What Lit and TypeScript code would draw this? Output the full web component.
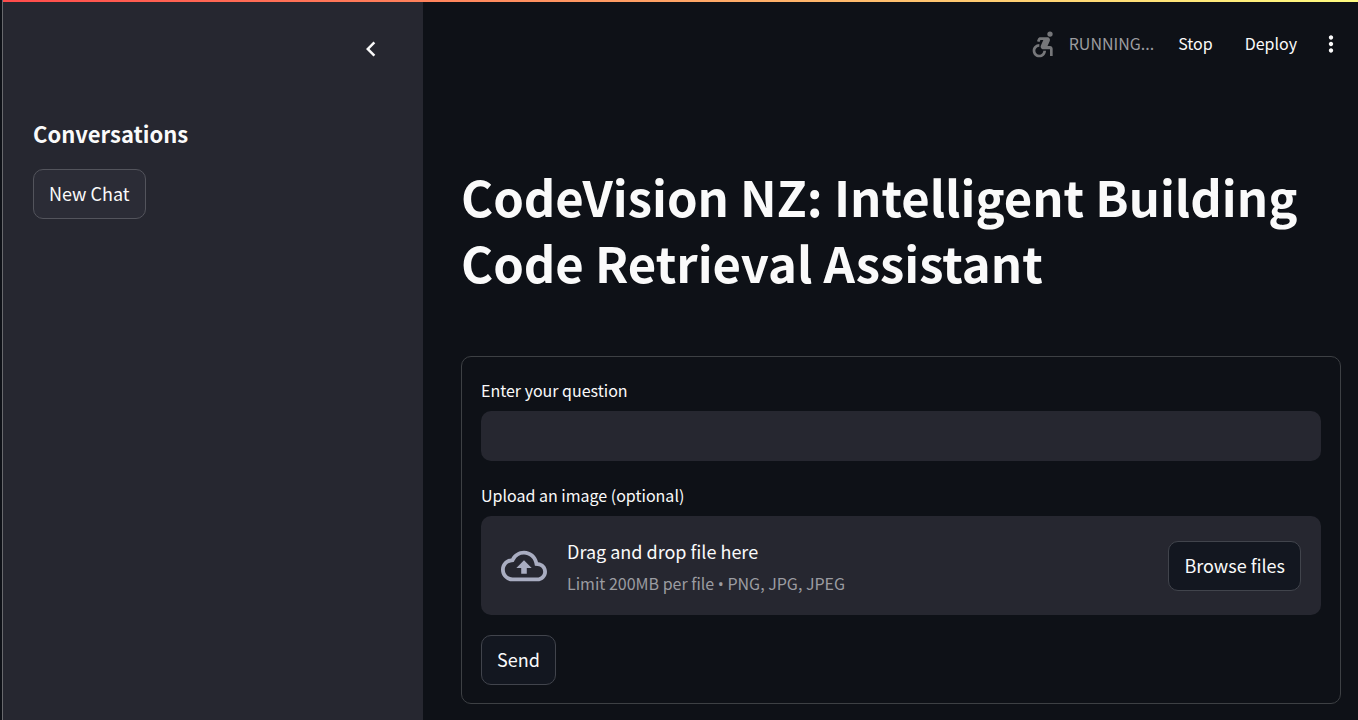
import { LitElement, html, css } from "lit";
import { customElement } from "lit/decorators.js";

@customElement("app-root")
export class AppRoot extends LitElement {
  static styles = css`
    :host {
      display: block;
      font-family: "Noto Sans CJK SC", "Noto Sans", sans-serif;
      font-size: 18px;
      line-height: 28px;
      color: #fafafa;
      background: #0e1117;
    }
    * {
      box-sizing: border-box;
    }
    .app {
      display: grid;
      grid-template-columns: 423px minmax(0, 1fr);
      min-height: 100vh;
    }
    .decoration {
      position: absolute;
      top: 0;
      left: 3px;
      right: 0;
      height: 2px;
      background: linear-gradient(90deg, #ff4b4b, #fffd80);
    }
    .sidebar {
      background: #262730;
      border-left: 1px solid #68696d;
      margin-left: 2px;
      padding: 34px 37px 30px 30px;
    }
    .collapse {
      display: block;
      margin: 0 0 0 auto;
      padding: 0;
      width: 30px;
      height: 30px;
      border: 0;
      background: none;
      color: inherit;
    }
    svg {
      display: block;
      fill: currentColor;
      flex: none;
    }
    .sidebar-title {
      margin: 54px 0 21px;
      font-size: 22px;
      line-height: 30px;
      font-weight: 700;
    }
    .button {
      height: 50px;
      padding: 0 15px 2px;
      border: 1px solid #41444c;
      border-radius: 10px;
      background: #131720;
      color: inherit;
      font: inherit;
      white-space: nowrap;
    }
    .sidebar .button {
      background: #2b2c36;
      border-color: #53545c;
    }
    .toolbar {
      display: flex;
      align-items: center;
      justify-content: flex-end;
      height: 60px;
      margin-top: 14px;
      padding-right: 14px;
      font-size: 16px;
    }
    .status {
      display: flex;
      align-items: center;
      gap: 11px;
      color: #9b9c9f;
      margin-right: 24px;
    }
    .status svg {
      color: #76777a;
    }
    .status span,
    .actions {
      padding-bottom: 2px;
    }
    .tool {
      padding: 0;
      border: 0;
      background: none;
      color: inherit;
      font: inherit;
    }
    .actions {
      display: flex;
      align-items: center;
      gap: 32px;
    }
    .menu {
      margin-left: 21px;
    }
    .content {
      padding: 89px 17px 16px 38px;
    }
    h1 {
      margin: 0 0 61px;
      font-size: 49px;
      line-height: 66px;
      font-weight: 700;
    }
    .form {
      display: flex;
      flex-direction: column;
      align-items: flex-start;
      padding: 19px 19px 18px;
      border: 1px solid #3d4044;
      border-radius: 10px;
    }
    .label {
      font-size: 16px;
      line-height: 28px;
      margin-bottom: 7px;
    }
    .question {
      width: 100%;
      height: 50px;
      margin-bottom: 20px;
      padding: 0 15px;
      border: 0;
      border-radius: 10px;
      outline: 0;
      background: #262730;
      color: inherit;
      font: inherit;
    }
    .dropzone {
      display: flex;
      align-items: center;
      gap: 20px;
      width: 100%;
      min-height: 99px;
      margin-bottom: 20px;
      padding: 16px 20px;
      border-radius: 10px;
      background: #262730;
    }
    .dropzone svg {
      color: #a9adc1;
    }
    .hint {
      flex: 1;
      padding-top: 2px;
    }
    .limit {
      margin-top: 4px;
      font-size: 16px;
      color: #9b9ca1;
    }
    .bullet {
      font-family: "Open Sans", sans-serif;
      line-height: 1;
    }
  `;

  render() {
    return html`
      <div class="decoration"></div>
      <div class="app">
        <aside class="sidebar">
          <button class="collapse" aria-label="Collapse sidebar">
            <svg width="30" height="30" viewBox="0 0 24 24">
              <path d="M15.41 7.41 14 6l-6 6 6 6 1.41-1.41L10.83 12z" />
            </svg>
          </button>
          <h2 class="sidebar-title">Conversations</h2>
          <button class="button">New Chat</button>
        </aside>
        <main>
          <header class="toolbar">
            <div class="status">
              <svg width="32" height="32" viewBox="0 0 24 24">
                <circle cx="18" cy="4.54" r="2" />
                <path
                  d="M15 17h-2c0 1.65-1.35 3-3 3s-3-1.35-3-3 1.35-3 3-3v-2c-2.76 0-5 2.24-5 5s2.24 5 5 5 5-2.24 5-5zm3-3.5h-1.86l1.67-3.67C18.42 8.5 17.44 7 15.96 7h-5.2c-.81 0-1.54.47-1.87 1.2L8.22 10l1.92.53.65-1.53H13l-1.83 4.1c-.6 1.33.39 2.9 1.85 2.9H18v5h2v-5.5c0-1.1-.9-2-2-2z"
                />
              </svg>
              <span>RUNNING...</span>
            </div>
            <div class="actions">
              <button class="tool">Stop</button>
              <button class="tool">Deploy</button>
            </div>
            <button class="tool menu" aria-label="Main menu">
              <svg width="26" height="26" viewBox="0 0 24 24">
                <path
                  d="M12 8c1.1 0 2-.9 2-2s-.9-2-2-2-2 .9-2 2 .9 2 2 2zm0 2c-1.1 0-2 .9-2 2s.9 2 2 2 2-.9 2-2-.9-2-2-2zm0 6c-1.1 0-2 .9-2 2s.9 2 2 2 2-.9 2-2-.9-2-2-2z"
                />
              </svg>
            </button>
          </header>
          <div class="content">
            <h1>CodeVision NZ: Intelligent Building Code Retrieval Assistant</h1>
            <form class="form" @submit=${(e: Event) => e.preventDefault()}>
              <label class="label" for="question">Enter your question</label>
              <input class="question" id="question" type="text" autocomplete="off" />
              <label class="label" for="browse">Upload an image (optional)</label>
              <div class="dropzone">
                <svg width="46" height="46" viewBox="0 0 24 24">
                  <path
                    d="M19.35 10.04C18.67 6.59 15.64 4 12 4 9.11 4 6.6 5.64 5.35 8.04 2.34 8.36 0 10.91 0 14c0 3.31 2.69 6 6 6h13c2.76 0 5-2.24 5-5 0-2.64-2.05-4.78-4.65-4.96zM19 18H6c-2.21 0-4-1.79-4-4 0-2.05 1.53-3.76 3.56-3.97l1.07-.11.5-.95A5.469 5.469 0 0 1 12 6c2.62 0 4.88 1.86 5.39 4.43l.3 1.5 1.53.11A2.98 2.98 0 0 1 22 15c0 1.65-1.35 3-3 3zM8 13h2.55v3h2.9v-3H16l-4-4z"
                  />
                </svg>
                <div class="hint">
                  <div>Drag and drop file here</div>
                  <div class="limit">Limit 200MB per file <span class="bullet">•</span> PNG, JPG, JPEG</div>
                </div>
                <button class="button" id="browse" type="button">Browse files</button>
              </div>
              <button class="button" type="submit">Send</button>
            </form>
          </div>
        </main>
      </div>
    `;
  }
}
